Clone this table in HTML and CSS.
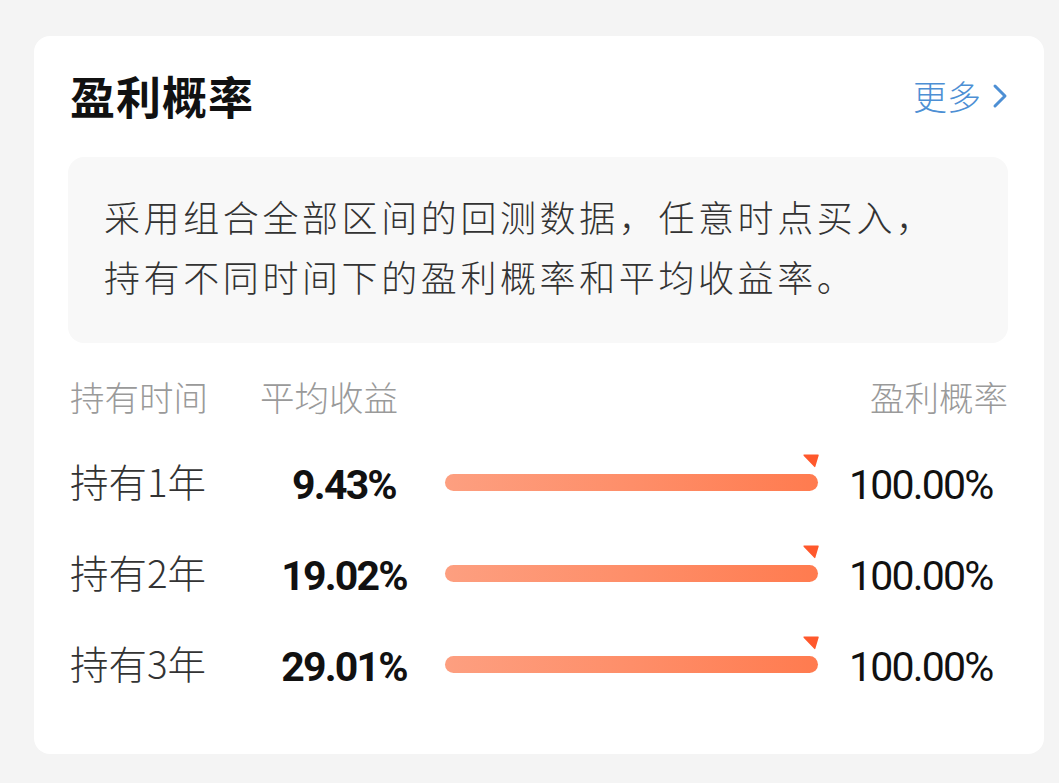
FILE: index.html
```html
<!DOCTYPE html>
<html lang="zh">
<head>
<meta charset="utf-8">
<title>盈利概率</title>
<link rel="stylesheet" href="styles.css">
</head>
<body>
<div class="card">
  <div class="head">
    <h2 class="title">盈利概率</h2>
    <a class="more">更多<svg class="chev" width="16" height="26" viewBox="0 0 16 26"><polyline points="3,3 13,13 3,23" fill="none" stroke="#4d8fd4" stroke-width="3" stroke-linecap="round" stroke-linejoin="round"/></svg></a>
  </div>
  <div class="desc">采用组合全部区间的回测数据，任意时点买入，<br>持有不同时间下的盈利概率和平均收益率。</div>
  <div class="thead">
    <span class="c-label">持有时间</span>
    <span>平均收益</span>
    <span class="c-right">盈利概率</span>
  </div>
  <div class="row">
    <span class="c-label lbl">持有1年</span>
    <span class="val">9.43%</span>
    <div class="bar"><div class="fill" style="width:100%"></div><svg class="mark" width="16" height="14" viewBox="0 0 16 14"><path d="M1 0.5 H15 Q16 0.5 15.7 1.6 L12.4 12.6 Q12 13.8 11.2 12.8 L0.6 1.8 Q0 0.5 1 0.5 Z" fill="#ff582c"/></svg></div>
    <span class="pct">100.00%</span>
  </div>
  <div class="row">
    <span class="c-label lbl">持有2年</span>
    <span class="val">19.02%</span>
    <div class="bar"><div class="fill" style="width:100%"></div><svg class="mark" width="16" height="14" viewBox="0 0 16 14"><path d="M1 0.5 H15 Q16 0.5 15.7 1.6 L12.4 12.6 Q12 13.8 11.2 12.8 L0.6 1.8 Q0 0.5 1 0.5 Z" fill="#ff582c"/></svg></div>
    <span class="pct">100.00%</span>
  </div>
  <div class="row">
    <span class="c-label lbl">持有3年</span>
    <span class="val">29.01%</span>
    <div class="bar"><div class="fill" style="width:100%"></div><svg class="mark" width="16" height="14" viewBox="0 0 16 14"><path d="M1 0.5 H15 Q16 0.5 15.7 1.6 L12.4 12.6 Q12 13.8 11.2 12.8 L0.6 1.8 Q0 0.5 1 0.5 Z" fill="#ff582c"/></svg></div>
    <span class="pct">100.00%</span>
  </div>
</div>
</body>
</html>
```

FILE: styles.css
```css
html, body {
  margin: 0;
  padding: 0;
  background: #f4f4f4;
  font-family: "Noto Sans CJK SC", "Noto Sans", sans-serif;
}
body {
  padding: 36px 15px 29px 34px;
}
.card {
  background: #fff;
  border-radius: 16px;
  padding: 30px 36px 44px 36px;
  min-height: 644px;
}
.head {
  display: flex;
  align-items: center;
  justify-content: space-between;
  height: 60px;
}
.title {
  margin: 0;
  font-size: 45px;
  font-weight: 700;
  color: #111;
  line-height: 60px;
  letter-spacing: 1px;
}
.more {
  display: flex;
  align-items: center;
  gap: 11px;
  color: #4d8fd4;
  font-size: 34px;
  font-weight: 300;
  line-height: 60px;
}
.chev {
  display: block;
}
.desc {
  margin: 31px 0 0 -2px;
  background: #f8f8f8;
  border-radius: 16px;
  padding: 29px 30px 37px 36px;
  font-size: 36px;
  font-weight: 300;
  line-height: 60px;
  letter-spacing: 3.6px;
  color: #333;
  white-space: nowrap;
}
.thead {
  display: flex;
  align-items: center;
  margin-top: 29px;
  height: 48px;
  font-size: 34.5px;
  font-weight: 300;
  color: #9a9a9a;
}
.c-label {
  width: 190px;
  flex: none;
}
.c-right {
  margin-left: auto;
}
.row {
  display: flex;
  align-items: center;
  height: 91px;
}
.thead + .row {
  margin-top: 17px;
}
.lbl {
  font-size: 38.5px;
  font-weight: 300;
  color: #333;
  padding-bottom: 5px;
}
.val {
  width: 168px;
  flex: none;
  text-align: center;
  font-family: Roboto, "Liberation Sans", sans-serif;
  font-weight: 700;
  font-size: 41px;
  letter-spacing: -1.8px;
  color: #111;
  padding-top: 4px;
}
.bar {
  position: relative;
  margin-left: 17px;
  width: 373px;
  height: 17px;
  flex: none;
}
.fill {
  height: 100%;
  border-radius: 9px;
  background: linear-gradient(90deg, #fd9f80 0%, #fe8e69 50%, #ff7b4f 100%);
}
.mark {
  position: absolute;
  right: -1px;
  top: -20px;
}
.pct {
  margin-left: 31px;
  font-family: Roboto, "Liberation Sans", sans-serif;
  font-weight: 400;
  font-size: 41px;
  letter-spacing: -1.8px;
  color: #111;
  padding-top: 4px;
}
```
